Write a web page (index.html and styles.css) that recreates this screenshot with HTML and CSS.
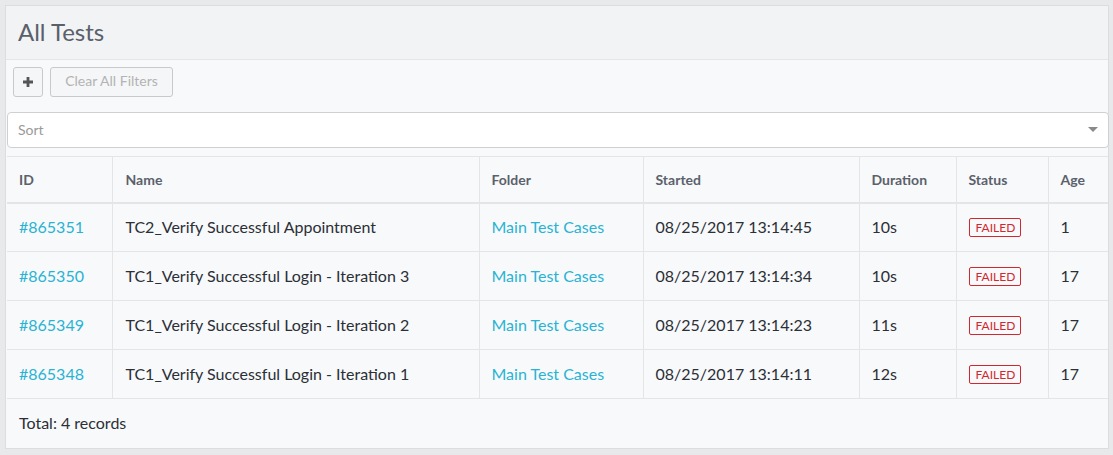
FILE: index.html
```html
<!DOCTYPE html>
<html>
<head>
<meta charset="utf-8">
<link rel="stylesheet" href="styles.css">
</head>
<body>
<div class="panel">
  <div class="panel-head"><h1 class="title">All Tests</h1></div>
  <div class="panel-body">
    <div class="toolbar">
      <button class="btn btn-icon"><svg width="10" height="10" viewBox="0 0 10 10"><path d="M3.6 0h2.8v3.6H10v2.8H6.4V10H3.6V6.4H0V3.6h3.6z" fill="#555"/></svg></button>
      <button class="btn btn-clear">Clear All Filters</button>
    </div>
    <div class="sort">
      <span class="sort-ph">Sort</span>
      <span class="caret"></span>
    </div>
    <table class="grid">
      <colgroup>
        <col class="c-id"><col class="c-name"><col class="c-folder"><col class="c-started"><col class="c-dur"><col class="c-status"><col class="c-age">
      </colgroup>
      <thead>
        <tr><th>ID</th><th class="name">Name</th><th>Folder</th><th>Started</th><th>Duration</th><th>Status</th><th>Age</th></tr>
      </thead>
      <tbody>
        <tr><td><a class="link">#865351</a></td><td class="name">TC2_Verify Successful Appointment</td><td><a class="link">Main Test Cases</a></td><td>08/25/2017 13:14:45</td><td>10s</td><td><span class="badge">FAILED</span></td><td>1</td></tr>
        <tr><td><a class="link">#865350</a></td><td class="name">TC1_Verify Successful Login - Iteration 3</td><td><a class="link">Main Test Cases</a></td><td>08/25/2017 13:14:34</td><td>10s</td><td><span class="badge">FAILED</span></td><td>17</td></tr>
        <tr><td><a class="link">#865349</a></td><td class="name">TC1_Verify Successful Login - Iteration 2</td><td><a class="link">Main Test Cases</a></td><td>08/25/2017 13:14:23</td><td>11s</td><td><span class="badge">FAILED</span></td><td>17</td></tr>
        <tr><td><a class="link">#865348</a></td><td class="name">TC1_Verify Successful Login - Iteration 1</td><td><a class="link">Main Test Cases</a></td><td>08/25/2017 13:14:11</td><td>12s</td><td><span class="badge">FAILED</span></td><td>17</td></tr>
      </tbody>
      <tfoot>
        <tr><td colspan="7" class="total">Total: 4 records</td></tr>
      </tfoot>
    </table>
  </div>
</div>
</body>
</html>
```
FILE: styles.css
```css
* { box-sizing: border-box; }
html, body { margin: 0; padding: 0; }
body {
  background: #e8e9eb;
  font-family: Lato, "Open Sans", sans-serif;
  color: #333;
  width: 1113px;
  height: 455px;
  overflow: hidden;
}
.panel {
  margin: 5px 4px 0 5px;
  border: 1px solid #dcdde0;
  background: #f8f9fb;
}
.panel-head {
  height: 54px;
  background: #f2f3f5;
  border-bottom: 1px solid #e4e5e7;
  padding: 0 12px;
  display: flex;
  align-items: center;
}
.title {
  margin: 0;
  font-weight: 400;
  font-size: 24px;
  color: #5a606a;
  padding-bottom: 2px;
}
.panel-body {
  padding: 7px 0 0 1px;
}
.toolbar {
  display: flex;
  gap: 7px;
  padding-left: 6px;
}
.btn {
  height: 30px;
  border: 1px solid #c8c9cb;
  border-radius: 3px;
  background: #f5f6f8;
  font-family: Lato, sans-serif;
  padding: 0;
}
.btn-icon {
  width: 30px;
  display: flex;
  align-items: center;
  justify-content: center;
}
.btn-clear {
  width: 123px;
  font-size: 14px;
  color: #b3b3b3;
  padding-bottom: 3px;
}
.sort {
  margin-top: 15px;
  height: 36px;
  width: 1102px;
  background: #fff;
  border: 1px solid #cfd0d2;
  border-radius: 4px;
  display: flex;
  align-items: center;
  justify-content: space-between;
  padding: 0 10px 1px 10px;
}
.sort-ph {
  font-size: 14px;
  color: #9a9a9a;
}
.caret {
  width: 0;
  height: 0;
  border-left: 5px solid transparent;
  border-right: 5px solid transparent;
  border-top: 5px solid #8a8a8a;
}
.grid {
  margin-top: 8px;
  width: 1101px;
  border-collapse: collapse;
  table-layout: fixed;
  font-size: 16px;
  background: #f8f9fb;
}
.c-id { width: 105px; }
.c-name { width: 367px; }
.c-folder { width: 164px; }
.c-started { width: 216px; }
.c-dur { width: 97px; }
.c-status { width: 92px; }
.c-age { width: 60px; }
.grid th, .grid td {
  border: 1px solid #e4e5e7;
  text-align: left;
  padding: 0 12px;
  white-space: nowrap;
}
.grid .name { padding-left: 13px; }
.grid th {
  height: 46px;
  font-size: 14px;
  font-weight: 700;
  color: #5b616b;
  border-bottom: 2px solid #e4e5e7;
}
.grid tbody td {
  height: 49px;
  color: #2b2f36;
  padding-bottom: 1px;
}
.grid tr > :first-child { border-left: none; }
.grid tr > :last-child { border-right: none; }
.link {
  color: #28b3d3;
  text-decoration: none;
}
.badge {
  display: inline-block;
  border: 1px solid #d1282f;
  color: #d1282f;
  border-radius: 2px;
  font-size: 12px;
  line-height: 17px;
  padding: 0 5px 0 6px;
  vertical-align: middle;
}
.grid tfoot td {
  height: 49px;
  border-bottom: none;
  color: #2b2f36;
  padding-bottom: 1px;
}
```
